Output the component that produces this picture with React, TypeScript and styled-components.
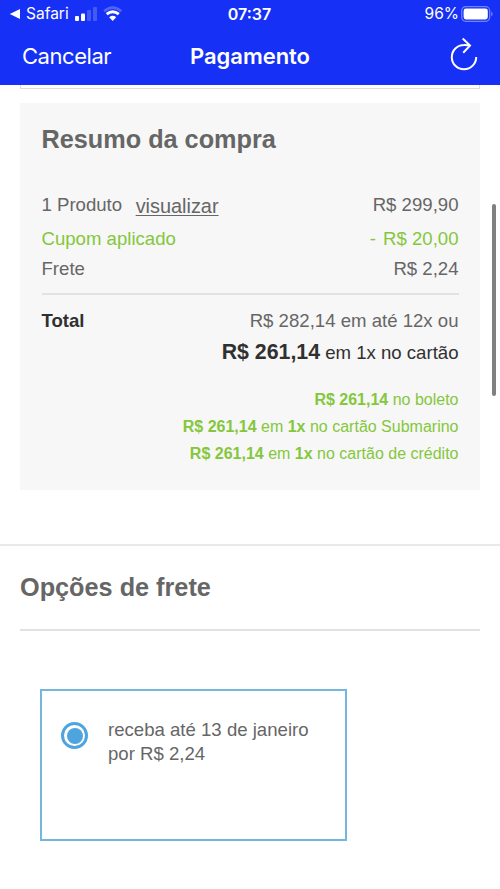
import React from "react";
import styled, { createGlobalStyle } from "styled-components";

const GlobalStyle = createGlobalStyle`
  * { box-sizing: border-box; }
  body { margin: 0; background: #fff; overflow: hidden; }
`;

const Screen = styled.div`
  position: relative;
  width: 500px;
  height: 889px;
  overflow: hidden;
  background: #fff;
  color: #666;
  font-family: "Liberation Sans", Arial, sans-serif;
  font-size: 18.6px;
  line-height: 24px;
`;

const Header = styled.header`
  height: 85px;
  background: #1631f5;
  color: #fff;
  font-family: Inter, sans-serif;
`;

const StatusBar = styled.div`
  display: grid;
  grid-template-columns: 1fr auto 1fr;
  align-items: center;
  height: 27px;
  padding: 0 7px 0 9px;
  font-size: 16px;
`;

const StatusGroup = styled.div<{ $end?: boolean }>`
  display: flex;
  align-items: center;
  justify-content: ${(p) => (p.$end ? "flex-end" : "flex-start")};
`;

const Carrier = styled.span`
  margin: 0 6px 0 5px;
  font-size: 15.5px;
`;

const Clock = styled.span`
  margin-right: 3px;
  font-size: 16px;
  font-weight: 600;
`;

const Battery = styled.span`
  margin-right: 2px;
  font-size: 15.5px;
`;

const NavBar = styled.nav`
  display: grid;
  grid-template-columns: 1fr auto 1fr;
  align-items: center;
  height: 57px;
  padding: 0 22px;
  font-size: 22px;
`;

const Cancel = styled.span`
  letter-spacing: -0.45px;
`;

const Title = styled.span`
  font-weight: 600;
  letter-spacing: -0.05px;
`;

const Reload = styled.span`
  display: flex;
  justify-content: flex-end;
  padding-bottom: 3px;
`;

const PreviousPanel = styled.div`
  height: 4px;
  margin: 0 20px 14px;
  border: 1px solid #ddd;
  border-top: 0;
`;

const Summary = styled.section`
  height: 387px;
  margin: 0 20px;
  padding: 21px 21.5px 0;
  background: #f7f7f7;
`;

const Heading = styled.h2`
  margin: 0;
  font-size: 25.25px;
  font-weight: 700;
  line-height: 30px;
`;

const Row = styled.div<{ $gap?: number; $green?: boolean }>`
  display: flex;
  justify-content: space-between;
  height: 24px;
  margin-top: ${(p) => p.$gap ?? 0}px;
  color: ${(p) => (p.$green ? "#84c73c" : "inherit")};
`;

const Product = styled.span`
  display: flex;
  gap: 13.5px;
`;

const View = styled.span`
  padding-top: 1px;
  font-size: 19.9px;
  text-decoration: underline;
  text-decoration-thickness: 1px;
  text-underline-offset: 2px;
`;

const Minus = styled.span`
  margin-right: 2px;
`;

const Divider = styled.hr<{ $top: number }>`
  height: 2px;
  margin: ${(p) => p.$top}px 0 0;
  border: 0;
  background: #e2e2e2;
`;

const TotalLabel = styled.strong`
  color: #303030;
  font-size: 18.6px;
`;

const CashPrice = styled.div`
  margin-top: 7px;
  color: #303030;
  text-align: right;
  strong { font-size: 21.3px; }
`;

const Offers = styled.div`
  margin-top: 21px;
  color: #84c73c;
  font-size: 16px;
  line-height: 27px;
  text-align: right;
`;

const Shipping = styled.section`
  margin-top: 54px;
  padding: 26px 20px 0;
  border-top: 2px solid #e9e9e9;
`;

const Option = styled.label`
  display: flex;
  width: 307px;
  height: 152px;
  margin: 58px 0 0 20px;
  padding: 27px 0 0 20px;
  border: 2px solid #74b6dc;
`;

const Radio = styled.span`
  display: grid;
  place-items: center;
  width: 27px;
  height: 27px;
  margin: 4px 20px 0 -1px;
  border: 3px solid #4da4df;
  border-radius: 50%;
  &::after {
    content: "";
    width: 16px;
    height: 16px;
    border-radius: 50%;
    background: #4da4df;
  }
`;

const ScrollThumb = styled.div`
  position: absolute;
  top: 204px;
  right: 4px;
  width: 4px;
  height: 192px;
  border-radius: 2px;
  background: #808080;
`;

export default function App() {
  return (
    <Screen>
      <GlobalStyle />
      <Header>
        <StatusBar>
          <StatusGroup>
            <svg width="12" height="12" viewBox="0 0 12 12"><path d="M.8 6 11 .9v10.2Z" fill="#fff" /></svg>
            <Carrier>Safari</Carrier>
            <svg width="23" height="14" viewBox="0 0 23 14" fill="#fff">
              <rect x="0" y="9" width="4" height="5" rx="1" />
              <rect x="6" y="6.5" width="4" height="7.5" rx="1" />
              <rect x="12" y="3" width="4" height="11" rx="1" opacity=".2" />
              <rect x="18" y="0" width="4" height="14" rx="1" opacity=".2" />
            </svg>
            <svg width="26" height="16" viewBox="-5.5 0 26 16" fill="none" stroke="#fff">
              <path d="M.7 5.2Q9.2 -2 17.8 5.2" strokeWidth="2.8" opacity=".25" />
              <path d="M3.2 8.2Q9.2 3.2 15.3 8.2" strokeWidth="2.9" />
              <path d="M5.7 11.2Q9.2 8.4 12.7 11.2L9.2 15Z" fill="#fff" stroke="none" />
            </svg>
          </StatusGroup>
          <Clock>07:37</Clock>
          <StatusGroup $end>
            <Battery>96%</Battery>
            <svg width="32" height="16" viewBox="0 0 32 16">
              <rect x=".7" y=".7" width="28" height="14.6" rx="4" fill="none" stroke="#fff" strokeWidth="1.2" opacity=".4" />
              <rect x="2.6" y="2.6" width="24.2" height="10.8" rx="2.3" fill="#fff" />
              <path d="M30.2 5.5q3 2.5 0 5Z" fill="#fff" opacity=".4" />
            </svg>
          </StatusGroup>
        </StatusBar>
        <NavBar>
          <Cancel>Cancelar</Cancel>
          <Title>Pagamento</Title>
          <Reload>
            <svg width="28" height="34" viewBox="0 0 28 34" fill="none" stroke="#fff" strokeWidth="2">
              <path d="M26.2 20A12.2 12.2 0 1 1 14 7.9Q17 7.8 20 8.6M12.7 1.5 20 8.6 13.2 15.8" />
            </svg>
          </Reload>
        </NavBar>
      </Header>
      <PreviousPanel />
      <Summary>
        <Heading>Resumo da compra</Heading>
        <Row $gap={39}>
          <Product><span>1 Produto</span><View>visualizar</View></Product>
          <span>R$ 299,90</span>
        </Row>
        <Row $gap={10} $green>
          <span>Cupom aplicado</span>
          <span><Minus>-</Minus> R$ 20,00</span>
        </Row>
        <Row $gap={6}><span>Frete</span><span>R$ 2,24</span></Row>
        <Divider $top={12} />
        <Row $gap={14}><TotalLabel>Total</TotalLabel><span>R$ 282,14 em até 12x ou</span></Row>
        <CashPrice><strong>R$ 261,14</strong> em 1x no cartão</CashPrice>
        <Offers>
          <div><strong>R$ 261,14</strong> no boleto</div>
          <div><strong>R$ 261,14</strong> em <strong>1x</strong> no cartão Submarino</div>
          <div><strong>R$ 261,14</strong> em <strong>1x</strong> no cartão de crédito</div>
        </Offers>
      </Summary>
      <Shipping>
        <Heading>Opções de frete</Heading>
        <Divider $top={27} />
        <Option>
          <Radio />
          <span>receba até 13 de janeiro<br />por R$ 2,24</span>
        </Option>
      </Shipping>
      <ScrollThumb />
    </Screen>
  );
}
